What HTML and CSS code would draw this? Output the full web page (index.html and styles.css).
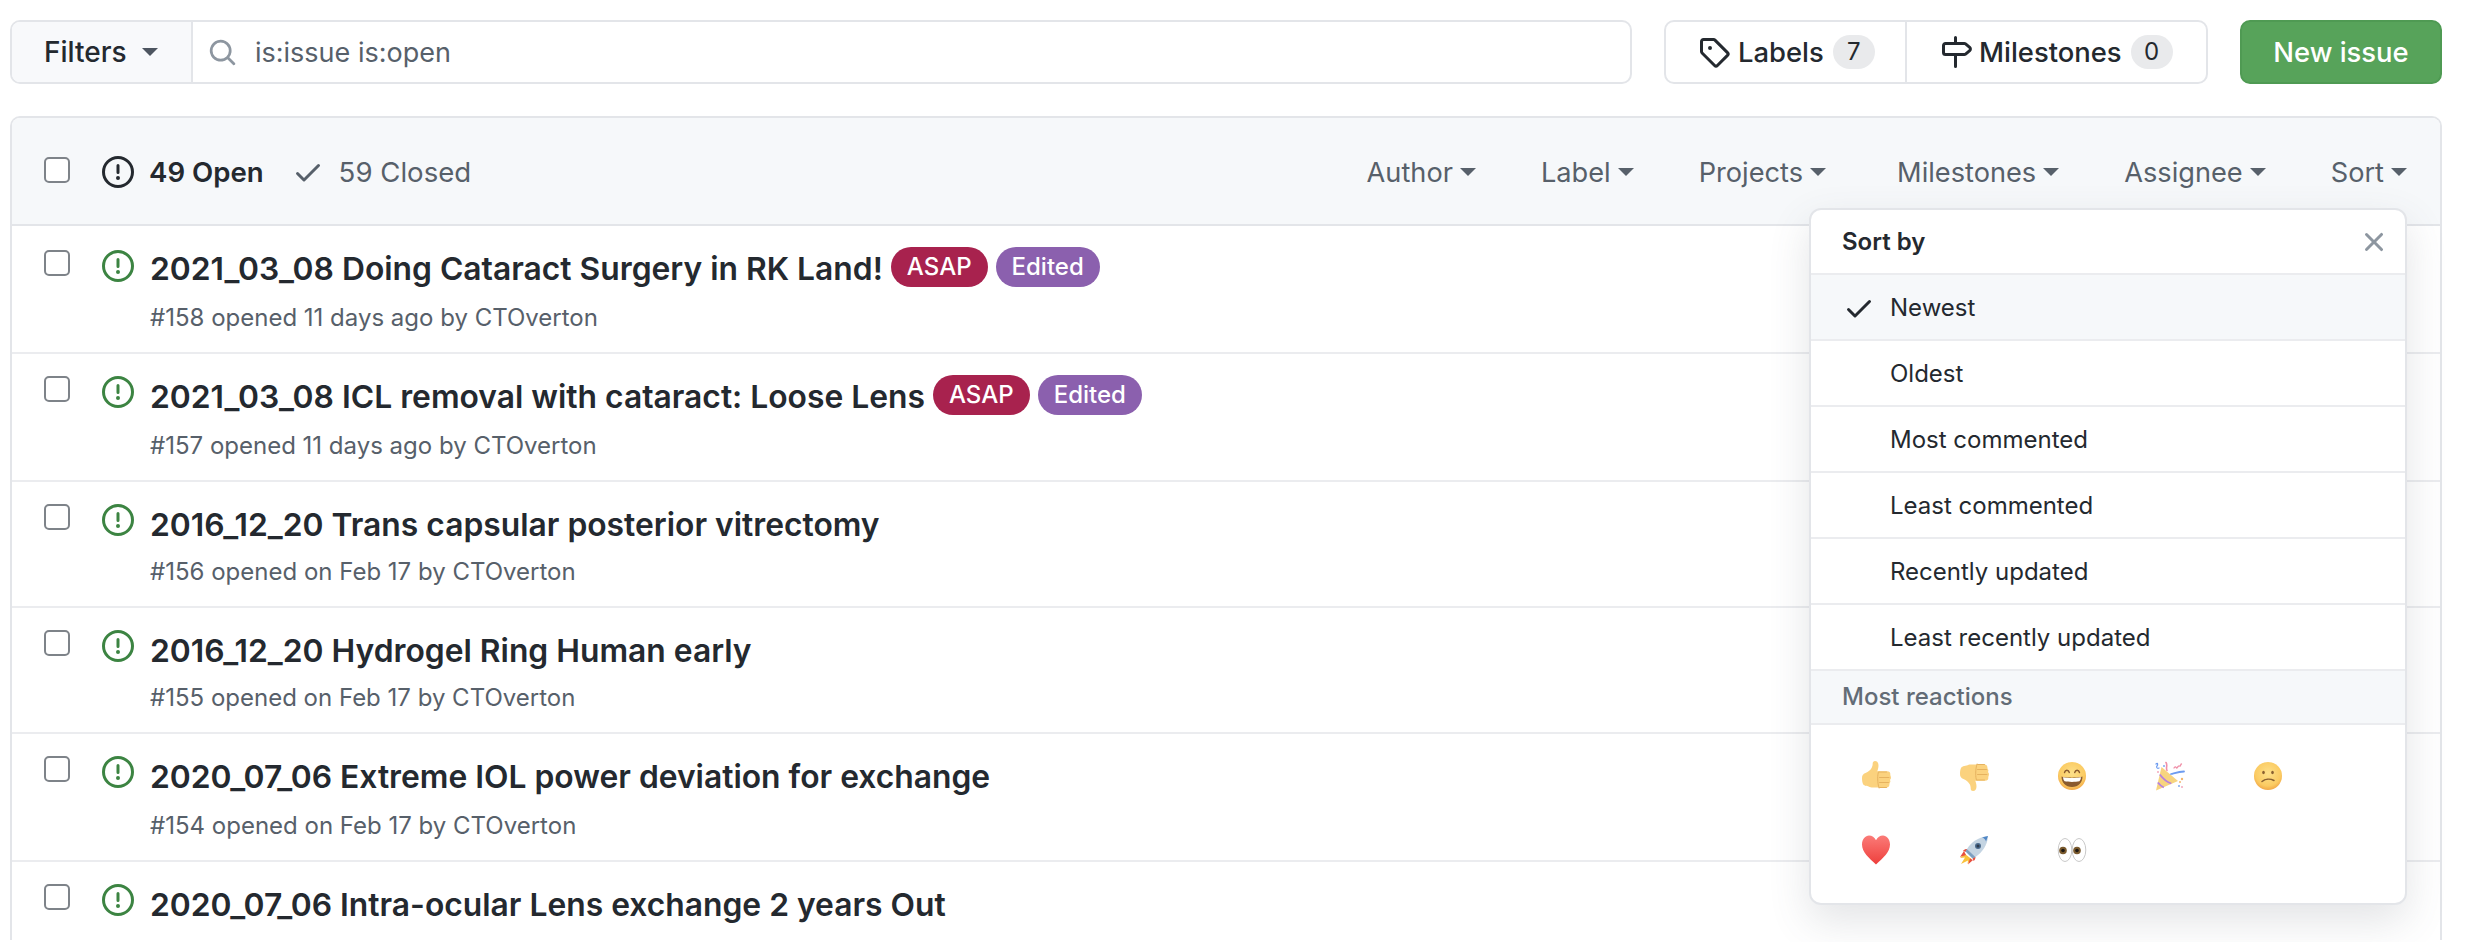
FILE: index.html
```html
<!DOCTYPE html>
<html lang="en">
<head>
    <meta charset="UTF-8">
    <title>Issues</title>
    <link rel="stylesheet" href="styles.css">
</head>
<body>
    <svg class="sprite" xmlns="http://www.w3.org/2000/svg">
        <defs>
            <symbol id="i-issue" viewBox="0 0 16 16"><path fill-rule="evenodd" d="M8 1.5a6.5 6.5 0 100 13 6.5 6.5 0 000-13zM0 8a8 8 0 1116 0A8 8 0 010 8zm9 3a1 1 0 11-2 0 1 1 0 012 0zm-.25-6.25a.75.75 0 00-1.5 0v3.5a.75.75 0 001.5 0v-3.5z"/></symbol>
            <symbol id="i-check" viewBox="0 0 16 16"><path fill-rule="evenodd" d="M13.78 4.22a.75.75 0 010 1.06l-7.25 7.25a.75.75 0 01-1.06 0L2.22 9.28a.75.75 0 011.06-1.06L6 10.94l6.72-6.72a.75.75 0 011.06 0z"/></symbol>
            <symbol id="i-thumb" viewBox="0 0 30 30">
                <path fill="#fbd27e" d="M1 17c0-2.500 1-4 3.500-5 2.800-1.100 5-3 6.200-5.300.8-1.500 1-3 1-4.400C11.700 1 12.700 0 14 0c2.400 0 3.500 2.200 3.500 4.600 0 2.200-.6 4-1.200 5.700h9.700c2.800 0 3.500 1.500 3.300 3.200-.1 1 .7 1.800.7 3.200 0 1-.7 1.700-1 2.300.5.800.6 2-.2 3-.4.500-.4 1.200-.4 1.800 0 1.500-1.100 2.700-3 2.700H12c-2 0-3-.6-4.400-1.100-1.600-.5-3.300-.4-4.200-1.100C1.800 24 1 20.500 1 17z"/>
                <path fill="none" stroke="#e6b25f" stroke-width="1" stroke-linecap="round" d="M18 11h7.500M18.500 16.500h9.500M18.500 21.500h9M18.500 26.500h7M17.500 11c-1.200 2-1.200 11 .5 16"/>
            </symbol>
        </defs>
    </svg>

    <div class="page">
        <div class="topbar">
            <div class="search">
                <div class="filters">Filters <span class="caret caret-big"></span></div>
                <div class="query">
                    <svg class="icon icon-search" viewBox="0 0 16 16"><path fill-rule="evenodd" d="M11.5 7a4.499 4.499 0 11-8.998 0A4.499 4.499 0 0111.5 7zm-.82 4.74a6 6 0 111.06-1.06l3.04 3.04a.75.75 0 11-1.06 1.06l-3.04-3.04z"/></svg>
                    <span>is:issue is:open</span>
                </div>
            </div>
            <div class="tabs">
                <div class="tab tab-labels">
                    <svg class="icon icon-tab" viewBox="0 0 16 16"><path fill-rule="evenodd" d="M2.5 7.775V2.75a.25.25 0 01.25-.25h5.025a.25.25 0 01.177.073l6.25 6.25a.25.25 0 010 .354l-5.025 5.025a.25.25 0 01-.354 0l-6.25-6.25a.25.25 0 01-.073-.177zm-1.5 0V2.75C1 1.784 1.784 1 2.75 1h5.025c.464 0 .91.184 1.238.513l6.25 6.25a1.75 1.75 0 010 2.474l-5.026 5.026a1.75 1.75 0 01-2.474 0l-6.25-6.25A1.75 1.75 0 011 7.775zM6 5a1 1 0 100 2 1 1 0 000-2z"/></svg>
                    Labels <span class="counter">7</span>
                </div>
                <div class="tab tab-milestones">
                    <svg class="icon icon-tab" viewBox="0 0 16 16"><path fill-rule="evenodd" d="M7.75 0a.75.75 0 01.75.75V3h3.634c.414 0 .814.147 1.13.414l2.07 1.75a1.75 1.75 0 010 2.672l-2.07 1.75a1.75 1.75 0 01-1.13.414H8.5v5.25a.75.75 0 11-1.5 0V10H2.75A1.75 1.75 0 011 8.25v-3.5C1 3.784 1.784 3 2.75 3H7V.75A.75.75 0 017.75 0zm0 8.5h4.384a.25.25 0 00.161-.06l2.07-1.75a.25.25 0 000-.38l-2.07-1.75a.25.25 0 00-.161-.06H2.75a.25.25 0 00-.25.25v3.5c0 .138.112.25.25.25h5z"/></svg>
                    Milestones <span class="counter">0</span>
                </div>
            </div>
            <div class="new-issue">New issue</div>
        </div>

        <div class="box">
            <div class="box-header">
                <input type="checkbox" class="check">
                <svg class="icon icon-state icon-dark"><use href="#i-issue"/></svg>
                <span class="open-count">49 Open</span>
                <svg class="icon icon-closed"><use href="#i-check"/></svg>
                <span class="closed-count">59 Closed</span>
                <div class="header-menus">
                    <span class="hmenu">Author <span class="caret"></span></span>
                    <span class="hmenu">Label <span class="caret"></span></span>
                    <span class="hmenu">Projects <span class="caret"></span></span>
                    <span class="hmenu hmenu-wide">Milestones <span class="caret"></span></span>
                    <span class="hmenu">Assignee <span class="caret"></span></span>
                    <span class="hmenu">Sort <span class="caret"></span></span>
                </div>
            </div>

            <div class="row">
                <input type="checkbox" class="check">
                <svg class="icon icon-state icon-green"><use href="#i-issue"/></svg>
                <div class="row-main">
                    <div class="title">2021_03_08 Doing Cataract Surgery in RK Land! <span class="label label-asap">ASAP</span> <span class="label label-edited">Edited</span></div>
                    <div class="meta">#158 opened 11 days ago by CTOverton</div>
                </div>
            </div>
            <div class="row">
                <input type="checkbox" class="check">
                <svg class="icon icon-state icon-green"><use href="#i-issue"/></svg>
                <div class="row-main">
                    <div class="title">2021_03_08 ICL removal with cataract: Loose Lens <span class="label label-asap">ASAP</span> <span class="label label-edited">Edited</span></div>
                    <div class="meta">#157 opened 11 days ago by CTOverton</div>
                </div>
            </div>
            <div class="row row-short">
                <input type="checkbox" class="check">
                <svg class="icon icon-state icon-green"><use href="#i-issue"/></svg>
                <div class="row-main">
                    <div class="title">2016_12_20 Trans capsular posterior vitrectomy</div>
                    <div class="meta">#156 opened on Feb 17 by CTOverton</div>
                </div>
            </div>
            <div class="row row-short">
                <input type="checkbox" class="check">
                <svg class="icon icon-state icon-green"><use href="#i-issue"/></svg>
                <div class="row-main">
                    <div class="title">2016_12_20 Hydrogel Ring Human early</div>
                    <div class="meta">#155 opened on Feb 17 by CTOverton</div>
                </div>
            </div>
            <div class="row">
                <input type="checkbox" class="check">
                <svg class="icon icon-state icon-green"><use href="#i-issue"/></svg>
                <div class="row-main">
                    <div class="title">2020_07_06 Extreme IOL power deviation for exchange</div>
                    <div class="meta">#154 opened on Feb 17 by CTOverton</div>
                </div>
            </div>
            <div class="row row-last">
                <input type="checkbox" class="check">
                <svg class="icon icon-state icon-green"><use href="#i-issue"/></svg>
                <div class="row-main">
                    <div class="title">2020_07_06 Intra-ocular Lens exchange 2 years Out</div>
                </div>
            </div>

            <!-- Sort menu, open over the list -->
            <div class="sort-menu">
                <div class="sort-head">
                    <span>Sort by</span>
                    <svg class="icon icon-close" viewBox="0 0 16 16"><path fill-rule="evenodd" d="M3.72 3.72a.75.75 0 011.06 0L8 6.94l3.22-3.22a.75.75 0 111.06 1.06L9.06 8l3.22 3.22a.75.75 0 11-1.06 1.06L8 9.06l-3.22 3.22a.75.75 0 01-1.06-1.06L6.94 8 3.72 4.78a.75.75 0 010-1.06z"/></svg>
                </div>
                <div class="sort-item sort-active"><svg class="icon icon-tick"><use href="#i-check"/></svg>Newest</div>
                <div class="sort-item">Oldest</div>
                <div class="sort-item">Most commented</div>
                <div class="sort-item">Least commented</div>
                <div class="sort-item">Recently updated</div>
                <div class="sort-item">Least recently updated</div>
                <div class="sort-sub">Most reactions</div>
                <div class="reactions">
                    <svg class="emoji"><use href="#i-thumb"/></svg>
                    <svg class="emoji emoji-down"><use href="#i-thumb"/></svg>
                    <svg class="emoji" viewBox="0 0 30 30">
                        <defs><radialGradient id="face" cx="50%" cy="40%" r="60%"><stop offset="0" stop-color="#fde08a"/><stop offset=".75" stop-color="#fbcb62"/><stop offset="1" stop-color="#f2a948"/></radialGradient></defs>
                        <circle cx="15" cy="15" r="14" fill="url(#face)"/>
                        <path d="M4.500 15.500c3 1.500 18 1.500 21 0 0 6-4 10.500-10.500 10.500S4.500 21.500 4.500 15.500z" fill="#8a5a2e"/>
                        <path d="M6 16.300c4 1 14 1 18 0-.2 2-.8 3-1.600 4-4 .8-10.800.8-14.800 0-.8-1-1.400-2-1.600-4z" fill="#fff"/>
                        <path d="M7.500 11.500c.8-3 4-3 4.800 0M17.700 11.500c.8-3 4-3 4.800 0" fill="none" stroke="#8a5a2e" stroke-width="1.400" stroke-linecap="round"/>
                    </svg>
                    <svg class="emoji" viewBox="0 0 30 30">
                        <path d="M6.500 6L1 29.500 23 20z" fill="#f7d47f"/>
                        <path d="M4.800 13.500c3 4 7 7.500 11.500 9M2.800 21.500c2 2.500 3.500 3.800 6 5" fill="none" stroke="#b77fe0" stroke-width="1.800"/>
                        <path d="M11 1.500c2 3-.5 5 1 8" fill="none" stroke="#f08fa8" stroke-width="1.600" stroke-linecap="round"/>
                        <path d="M1 3c2-2 2 1 1 2s0 3 2 2" fill="none" stroke="#6d9cf0" stroke-width="1.200" stroke-linecap="round"/>
                        <path d="M19 7c1-2 2-1 2.500 0s1.500-3 3-2 1-3 2-2" fill="none" stroke="#f08fa8" stroke-width="1.300" stroke-linecap="round"/>
                        <path d="M16 13c4-1 8-2.500 13-2.500" fill="none" stroke="#6d9cf0" stroke-width="1.800" stroke-linecap="round"/>
                        <circle cx="27" cy="18" r="1.200" fill="#f2b66e"/><circle cx="25" cy="21" r="1" fill="#f2b66e"/><circle cx="27" cy="26" r="1" fill="#f3a9bd"/><circle cx="24" cy="25" r="1" fill="#7ea9f0"/><circle cx="9" cy="5" r="1" fill="#7ea9f0"/><circle cx="3" cy="11" r="1" fill="#f3a9bd"/>
                    </svg>
                    <svg class="emoji" viewBox="0 0 30 30">
                        <defs><radialGradient id="face2" cx="50%" cy="40%" r="60%"><stop offset="0" stop-color="#fde08a"/><stop offset=".75" stop-color="#fbcb62"/><stop offset="1" stop-color="#f2a948"/></radialGradient></defs>
                        <circle cx="15" cy="15" r="14" fill="url(#face2)"/>
                        <ellipse cx="10.500" cy="11.500" rx="1.300" ry="1.700" fill="#8a6030"/><ellipse cx="19.500" cy="11.500" rx="1.300" ry="1.700" fill="#8a6030"/>
                        <path d="M9 20.500c3-2.500 8-3 12-1" fill="none" stroke="#8a6030" stroke-width="1.500" stroke-linecap="round"/>
                    </svg>
                    <svg class="emoji" viewBox="0 0 30 30">
                        <defs><linearGradient id="heart" x1="0" y1="0" x2="0" y2="1"><stop offset="0" stop-color="#fb7b78"/><stop offset="1" stop-color="#ee3f3c"/></linearGradient></defs>
                        <path d="M15 29.500C8 23 1 17 1 9.500 1 4 4.500 .5 8 .5c3 0 5.500 1.800 7 4.800C16.500 2.300 19 .5 22 .5c3.500 0 7 3.500 7 9C29 17 22 23 15 29.500z" fill="url(#heart)"/>
                    </svg>
                    <svg class="emoji" viewBox="0 0 30 30">
                        <path d="M6 19l-5 4 5-.5L2 29l7-3.500-.5 3.500 4-5z" fill="#f9c23c"/>
                        <path d="M5 16L1 22l6-2zM14 25l-5 4.500 2-6z" fill="#e8503f"/>
                        <path d="M8 14C12 7 20 2 29 1c-.5 9-5.500 16-12.500 21z" fill="#c4d4e2"/>
                        <path d="M23 2.500c2 .5 3.500 2 4 4L29 1z" fill="#4f86c6"/>
                        <path d="M8 14c-1.500 0-3 .5-4 2l3.500 1zM16.500 22c0 1.500-.5 3-2 4l-1-3.500z" fill="#e8503f"/>
                        <path d="M8 14l8.500 8-3 1.500-7-7z" fill="#7d9fc0"/>
                        <circle cx="19" cy="11" r="3" fill="#4a6a8c"/><circle cx="19" cy="11" r="1.500" fill="#2d3b4d"/>
                    </svg>
                    <svg class="emoji" viewBox="0 0 30 30">
                        <ellipse cx="8" cy="15" rx="6.800" ry="11.500" fill="#fff" stroke="#c9c9c9" stroke-width="1"/>
                        <ellipse cx="22" cy="15" rx="6.800" ry="11.500" fill="#fff" stroke="#c9c9c9" stroke-width="1"/>
                        <circle cx="6" cy="15.500" r="3.800" fill="#7a5a2e"/><circle cx="6" cy="15.500" r="1.800" fill="#1f1a14"/>
                        <circle cx="20" cy="15.500" r="3.800" fill="#7a5a2e"/><circle cx="20" cy="15.500" r="1.800" fill="#1f1a14"/>
                    </svg>
                </div>
            </div>
        </div>
    </div>
</body>
</html>
```

FILE: styles.css
```css
* {
    box-sizing: border-box;
}

html, body {
    margin: 0;
    height: 100%;
    overflow: hidden;
    background: #fff;
}

body {
    font-family: "Inter", "Liberation Sans", sans-serif;
    color: #24292f;
}

.sprite {
    display: none;
}

.page {
    padding: 20px 38px 0 10px;
}

.icon {
    display: block;
    flex: none;
    fill: currentColor;
}

/* Top bar */
.topbar {
    display: flex;
    height: 64px;
    margin-bottom: 32px;
}

.search {
    flex: 1;
    display: flex;
    border: 2px solid #e3e5e9;
    border-radius: 10px;
    background: #fff;
    font-size: 28px;
}

.filters {
    width: 181px;
    display: flex;
    align-items: center;
    gap: 15px;
    padding-left: 32px;
    background: #f8f9fb;
    border-right: 2px solid #e3e5e9;
    border-radius: 8px 0 0 8px;
    font-weight: 500;
}

.query {
    display: flex;
    align-items: center;
    color: #57606a;
    font-size: 27px;
}

.icon-search {
    width: 29px;
    height: 29px;
    margin: 0 18px 0 15px;
    color: #8d96a0;
}

.tabs {
    display: flex;
    margin-left: 32px;
    border: 2px solid #e3e5e9;
    border-radius: 10px;
    font-size: 27.4px;
    font-weight: 500;
}

.tab {
    display: flex;
    align-items: center;
}

.tab-labels {
    width: 241px;
    padding-left: 32px;
    border-right: 2px solid #e3e5e9;
}

.tab-milestones {
    width: 299px;
    padding-left: 33px;
}

.icon-tab {
    width: 32px;
    height: 32px;
    margin-right: 7px;
}

.tab-labels .icon-tab {
    margin-right: 8px;
}

.counter {
    width: 42px;
    height: 34px;
    margin-left: 9px;
    border-radius: 17px;
    background: #e9eaec;
    font-size: 24px;
    font-weight: 400;
    line-height: 34px;
    text-align: center;
}

.new-issue {
    width: 202px;
    margin-left: 32px;
    border-radius: 10px;
    background: #57a35a;
    border: 2px solid #4f9a53;
    color: #fff;
    font-size: 27.4px;
    font-weight: 500;
    line-height: 60px;
    text-align: center;
}

/* Issue list */
.box {
    position: relative;
    border: 2px solid #e3e5e9;
    border-bottom: none;
    border-radius: 10px 10px 0 0;
}

.box-header {
    display: flex;
    align-items: center;
    height: 108px;
    padding: 2px 0 0 32px;
    background: #f6f8fa;
    border-radius: 8px 8px 0 0;
    border-bottom: 2px solid #e3e5e9;
    font-size: 27.6px;
    color: #57606a;
}

.check {
    appearance: none;
    flex: none;
    width: 26px;
    height: 26px;
    margin: 0 32px 0 0;
    background: #fff;
    border: 2px solid #7e8389;
    border-radius: 5px;
}

.box-header .check {
    margin-bottom: 4px;
}

.icon-state {
    width: 32px;
    height: 32px;
}

.icon-dark {
    color: #24292f;
}

.icon-green {
    color: #3c8442;
}

.open-count {
    margin-left: 15px;
    font-weight: 600;
    color: #24292f;
}

.icon-closed {
    width: 32px;
    height: 32px;
    margin-left: 28px;
}

.closed-count {
    margin-left: 15px;
}

.header-menus {
    display: flex;
    gap: 65px;
    margin-left: auto;
    padding-right: 33px;
    font-size: 27.2px;
}

.hmenu {
    display: flex;
    align-items: center;
    gap: 7px;
}

.hmenu-wide {
    margin-left: 6px;
}

.caret {
    width: 0;
    height: 0;
    border-style: solid;
    border-width: 8px 8px 0;
    border-color: currentColor transparent transparent;
}

.caret-big {
    color: #4d5560;
}

.row {
    display: flex;
    height: 128px;
    padding: 22px 0 0 32px;
    border-bottom: 2px solid #ebecef;
}

.box-header + .row {
    padding-top: 24px;
}

.box-header + .row .row-main {
    margin-top: -2px;
}

.row-short {
    height: 126px;
}

.row-last {
    height: 78px;
    border-bottom: none;
}

.row-main {
    margin-left: 16px;
}

.title {
    display: flex;
    align-items: center;
    gap: 8px;
    height: 40px;
    font-size: 31.8px;
    font-weight: 600;
    color: #24292f;
}

.label {
    height: 40px;
    margin-top: -2px;
    padding: 0 16px;
    border-radius: 20px;
    color: #fff;
    font-size: 24px;
    font-weight: 500;
    line-height: 40px;
}

.label-asap {
    background: #a8224e;
}

.label-edited {
    background: #8b60ae;
}

.meta {
    margin-top: 15px;
    font-size: 24px;
    color: #57606a;
}

.row-short .meta {
    margin-top: 13px;
}

/* Sort menu */
.sort-menu {
    position: absolute;
    top: 90px;
    right: 33px;
    width: 598px;
    height: 697px;
    background: #fff;
    border: 2px solid #e3e5e9;
    border-radius: 12px;
    box-shadow: 0 16px 40px rgba(80, 90, 100, .16);
    font-size: 24px;
    overflow: hidden;
}

.sort-head {
    display: flex;
    align-items: center;
    justify-content: space-between;
    height: 65px;
    padding: 0 15px 0 31px;
    border-bottom: 2px solid #ebecef;
    font-weight: 600;
}

.icon-close {
    width: 32px;
    height: 32px;
    color: #8d96a0;
}

.sort-item {
    display: flex;
    align-items: center;
    height: 66px;
    padding-left: 79px;
    position: relative;
    border-bottom: 2px solid #ebecef;
}

.sort-active {
    background: #f6f8fa;
}

.icon-tick {
    position: absolute;
    left: 32px;
    top: 17px;
    width: 32px;
    height: 32px;
}

.sort-sub {
    height: 54px;
    padding-left: 31px;
    background: #f6f8fa;
    border-bottom: 2px solid #ebecef;
    color: #636c76;
    font-weight: 500;
    line-height: 52px;
}

.reactions {
    display: grid;
    grid-template-columns: repeat(5, 98px);
    grid-auto-rows: 74px;
    padding: 14px 0 0 16px;
    justify-items: center;
    align-items: center;
}

.emoji {
    display: block;
    width: 30px;
    height: 30px;
}

.emoji-down {
    transform: scaleY(-1);
}
```
